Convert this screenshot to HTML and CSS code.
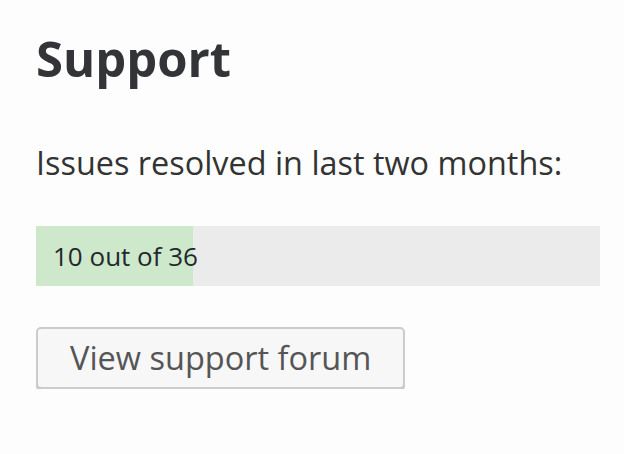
FILE: index.html
```html
<!DOCTYPE html>
<html>
<head>
<meta charset="utf-8">
<link rel="stylesheet" href="styles.css">
</head>
<body>
<div class="panel">
  <h2 class="title">Support</h2>
  <p class="lead">Issues resolved in last two months:</p>
  <div class="progress">
    <div class="progress-fill" style="width: 27.78%"></div>
    <span class="progress-label">10 out of 36</span>
  </div>
  <a class="button" href="#">View support forum</a>
</div>
</body>
</html>
```
FILE: styles.css
```css
html, body {
  margin: 0;
  padding: 0;
  background: #fdfdfd;
}
body {
  font-family: "Open Sans", "Noto Sans", sans-serif;
  color: #3c434a;
}
.panel {
  padding: 25px 24px 0 36px;
}
.title {
  margin: 0;
  font-size: 49px;
  font-weight: 700;
  line-height: 66px;
  color: #333437;
}
.lead {
  margin: 49px 0 0;
  font-size: 32.4px;
  line-height: 44px;
  color: #333;
}
.progress {
  position: relative;
  margin-top: 42px;
  height: 60px;
  background: #ebebeb;
  display: flex;
  align-items: center;
}
.progress-fill {
  position: absolute;
  left: 0;
  top: 0;
  bottom: 0;
  background: #cde8cb;
}
.progress-label {
  position: relative;
  padding-left: 17px;
  font-size: 26px;
  color: #23282d;
}
.button {
  display: inline-block;
  margin-top: 41px;
  padding: 0 32px;
  height: 58px;
  line-height: 58px;
  font-size: 32.5px;
  color: #555;
  text-decoration: none;
  background: #f7f7f7;
  border: 2px solid #cccccc;
  border-radius: 5px;
  box-shadow: 0 2px 0 #c4c4c4;
}
```
